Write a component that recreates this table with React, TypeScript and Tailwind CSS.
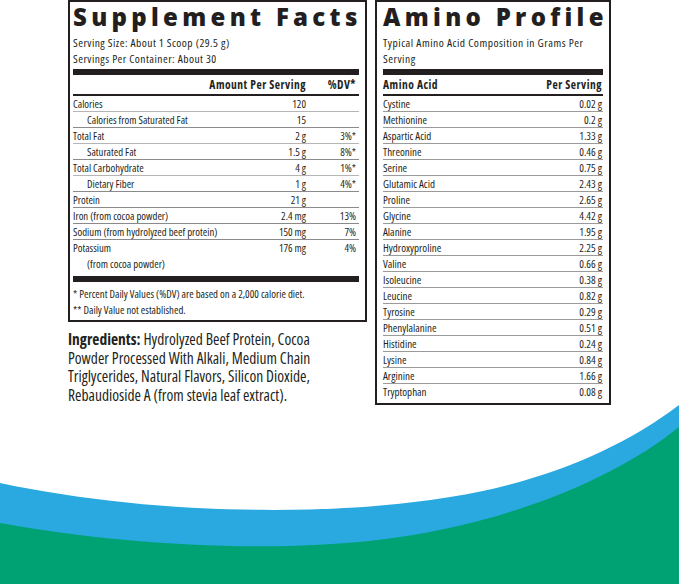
import React from 'react';

const body = { fontFamily: '"Open Sans", "Liberation Sans", sans-serif' };

interface FactRow {
  label: string;
  amount: string;
  dv: string;
  indent?: boolean;
  sub?: string;
}

const facts: FactRow[] = [
  { label: 'Calories', amount: '120', dv: '' },
  { label: 'Calories from Saturated Fat', amount: '15', dv: '', indent: true },
  { label: 'Total Fat', amount: '2 g', dv: '3%*' },
  { label: 'Saturated Fat', amount: '1.5 g', dv: '8%*', indent: true },
  { label: 'Total Carbohydrate', amount: '4 g', dv: '1%*' },
  { label: 'Dietary Fiber', amount: '1 g', dv: '4%*', indent: true },
  { label: 'Protein', amount: '21 g', dv: '' },
  { label: 'Iron (from cocoa powder)', amount: '2.4 mg', dv: '13%' },
  { label: 'Sodium (from hydrolyzed beef protein)', amount: '150 mg', dv: '7%' },
  { label: 'Potassium', amount: '176 mg', dv: '4%', sub: '(from cocoa powder)' },
];

const aminos: [string, string][] = [
  ['Cystine', '0.02 g'],
  ['Methionine', '0.2 g'],
  ['Aspartic Acid', '1.33 g'],
  ['Threonine', '0.46 g'],
  ['Serine', '0.75 g'],
  ['Glutamic Acid', '2.43 g'],
  ['Proline', '2.65 g'],
  ['Glycine', '4.42 g'],
  ['Alanine', '1.95 g'],
  ['Hydroxyproline', '2.25 g'],
  ['Valine', '0.66 g'],
  ['Isoleucine', '0.38 g'],
  ['Leucine', '0.82 g'],
  ['Tyrosine', '0.29 g'],
  ['Phenylalanine', '0.51 g'],
  ['Histidine', '0.24 g'],
  ['Lysine', '0.84 g'],
  ['Arginine', '1.66 g'],
  ['Tryptophan', '0.08 g'],
];

const Title: React.FC<{ text: string }> = ({ text }) => (
  <div className="mt-[1px] h-[28px] text-[24px] leading-[28px] font-extrabold tracking-[4.3px] whitespace-nowrap font-stretch-normal">
    {text}
  </div>
);

const SupplementFacts = () => (
  <div className="w-[299px] border-2 border-[#231f20] pl-[3px] pr-[6px]">
    <Title text="Supplement Facts" />
    <div className="mt-[4px] text-[11.5px] leading-[16px] tracking-[0.45px]">
      <div>Serving Size: About 1 Scoop (29.5 g)</div>
      <div>Servings Per Container: About 30</div>
    </div>
    <div className="mt-[2px] h-[6px] bg-[#231f20]" />
    <div className="flex h-[21px] items-start border-b-2 border-[#231f20] text-[11.5px] leading-[19px] font-bold tracking-[0.5px]">
      <div className="flex-1" />
      <div className="w-[130px] text-right">Amount Per Serving</div>
      <div className="w-[53px] pr-[3px] text-right">%DV*</div>
    </div>
    {facts.map((f, i) => {
      const last = i === facts.length - 1;
      const nextIndent = !last && facts[i + 1].indent;
      return (
        <div
          key={f.label}
          className={`text-[10.75px] leading-[16px] ${last ? '' : 'border-b ' + (nextIndent ? 'border-[#b5b5b5]' : 'border-[#8a8a8a]')}`}
        >
          <div className={`flex ${last ? 'h-[16px]' : 'h-[15px]'} items-center`}>
            <div className={`flex-1 whitespace-nowrap ${f.indent ? 'pl-[14px]' : ''}`}>{f.label}</div>
            <div className="w-[80px] text-right">{f.amount}</div>
            <div className="w-[53px] pr-[3px] text-right">{f.dv}</div>
          </div>
          {f.sub && <div className="h-[16px] pl-[14px]">{f.sub}</div>}
        </div>
      );
    })}
    <div className="mt-[4px] h-[6px] bg-[#231f20]" />
    <div className="pt-[4px] pb-[2px] text-[10.8px] leading-[16px]">
      <div>* Percent Daily Values (%DV) are based on a 2,000 calorie diet.</div>
      <div>** Daily Value not established.</div>
    </div>
  </div>
);

const AminoProfile = () => (
  <div className="w-[236px] border-2 border-[#231f20] px-[6px] pb-[3px]">
    <Title text="Amino Profile" />
    <div className="mt-[4px] text-[11.5px] leading-[16px] tracking-[0.5px]">
      <div>Typical Amino Acid Composition in Grams Per</div>
      <div>Serving</div>
    </div>
    <div className="mt-[2px] h-[6px] bg-[#231f20]" />
    <div className="flex h-[21px] justify-between border-b-2 border-[#231f20] text-[11.5px] leading-[19px] font-bold tracking-[0.5px]">
      <span>Amino Acid</span>
      <span className="pr-[1px]">Per Serving</span>
    </div>
    {aminos.map(([name, val], i) => (
      <div
        key={name}
        className={`flex h-[16px] justify-between text-[11px] leading-[15px] ${i === aminos.length - 1 ? '' : 'border-b border-[#9a9a9a]'}`}
      >
        <span>{name}</span>
        <span className="pr-[1px]">{val}</span>
      </div>
    ))}
  </div>
);

export default function App() {
  return (
    <div style={body} className="flex h-[584px] w-[679px] flex-col overflow-hidden bg-white text-[#231f20] font-stretch-condensed">
      <div className="flex h-[405px] shrink-0 gap-[8px] pl-[68px]">
        <div className="flex flex-col">
          <SupplementFacts />
          <p className="mt-[8px] whitespace-nowrap text-[15.5px] leading-[18.5px]">
            <span className="font-bold">Ingredients:</span> Hydrolyzed Beef Protein, Cocoa
            <br />
            Powder Processed With Alkali, Medium Chain
            <br />
            Triglycerides, Natural Flavors, Silicon Dioxide,
            <br />
            Rebaudioside A (from stevia leaf extract).
          </p>
        </div>
        <div>
          <AminoProfile />
        </div>
      </div>
      <svg className="block shrink-0" width="679" height="179" viewBox="0 0 679 179">
        <path d="M0 78 C150 110 330 112 450 92 C540 78 620 45 679 0 L679 179 L0 179 Z" fill="#29a9df" />
        <path d="M0 118 C120 140 280 150 400 132 C520 114 620 70 679 22 L679 179 L0 179 Z" fill="#00a273" />
      </svg>
    </div>
  );
}
